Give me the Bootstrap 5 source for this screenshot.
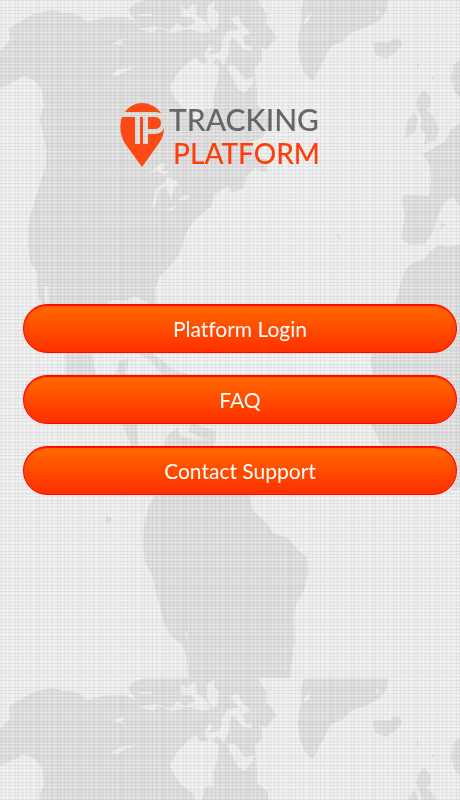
<!DOCTYPE html>
<html lang="en">
<head>
<meta charset="utf-8">
<meta name="viewport" content="width=device-width, initial-scale=1">
<title>Tracking Platform</title>
<link href="https://cdn.jsdelivr.net/npm/bootstrap@5.3.0/dist/css/bootstrap.min.css" rel="stylesheet">
<style>
  body { background: #eee; font-family: Lato, sans-serif; }
  .world-map { z-index: -1; }
  .brand-row { padding-top: 102px; padding-bottom: 134px; padding-right: 20px; }
  .brand-name { font-size: 30px; line-height: 34px; font-weight: 500; color: #666; }
  .brand-name .brand-second { font-size: 28px; color: #ff3d0a; padding-left: 4px; }
  .menu-list { padding-left: 23px; padding-right: 3px; gap: 22px; }
  .btn-menu {
    --bs-btn-color: #fff;
    --bs-btn-hover-color: #fff;
    --bs-btn-active-color: #fff;
    --bs-btn-border-color: #ff0800;
    --bs-btn-hover-border-color: #ff0800;
    --bs-btn-active-border-color: #ff0800;
    --bs-btn-font-size: 21px;
    --bs-btn-line-height: 33px;
    --bs-btn-padding-y: 7px;
    --bs-btn-border-radius: 24px;
    background: linear-gradient(#ff6a00, #ff2f00);
    box-shadow: inset 0 1px 1px #ff0800;
    font-variant-ligatures: none;
  }
</style>
<script src="https://cdn.jsdelivr.net/npm/bootstrap@5.3.0/dist/js/bootstrap.bundle.min.js"></script>
</head>
<body>
<svg class="world-map position-fixed top-0 start-0 w-100 h-100" aria-hidden="true">
  <defs>
    <pattern id="map" width="920" height="678" patternUnits="userSpaceOnUse">
      <g fill="#dcdcdc">
        <path d="M-5 54L3 48L10 40L9 29L14 25L25 19L33 14L47 11L55 10L62 13L72 13L80 16L87 22L94 20L108 17L125 17L136 22L128 10L134 4L145 0H258L262 7L267 14L266 24L272 30L277 38L271 43L266 50L261 47L262 60L255 68L257 90L257 105L267 113L269 126L263 137L250 143L258 157L269 160L266 173L255 168L246 177L244 188L232 193L228 186L214 195L211 207L203 213L194 221L186 233L180 253L172 264L160 276L155 290L156 306L162 322L158 330L151 317L148 303L135 296L125 301L113 300L101 308L95 325L94 340L92 353L96 376L108 390L123 398L127 424L137 424L139 447L153 460L149 466L131 446L122 423L107 405L86 393L66 378L65 353L54 330L42 304L38 296L37 272L30 262L28 245L29 220L35 200L41 181L46 164L46 150L43 132L39 118L44 107L42 90L35 81L24 76L15 81L-5 91Z"/>
        <path d="M115 378L119 361L129 358L126 374L120 382ZM139 354L151 353L162 360L170 368L188 374L178 379L160 373L151 361ZM163 449L167 436L178 427L180 436L194 440L216 438L213 448L245 470L250 497L253 511L265 521L274 534L287 537L299 551L307 557L308 573L304 590L296 604L294 618L295 640L290 678H188L187 660L183 646L170 635L164 623L157 596L152 575L145 562L143 544L144 525L148 508L156 494L156 470Z"/>
        <path d="M193 421L200 426L216 431L215 438L202 438L188 431ZM304 0H388L386 12L380 20L365 28L352 32L342 42L331 46L325 58L319 69L313 81L305 74L300 62L298 42L301 25L301 9ZM374 51L373 43L382 42L388 43L394 38L400 39L402 45L395 53L386 59L376 55ZM106 515L112 519L107 525Z"/>
        <path d="M418 97L424 89L431 98L430 107L426 109L434 117L439 130L435 141L423 145L426 136L420 127L422 119L416 105ZM407 122L414 112L418 120L415 132L405 139ZM460 123L451 130L445 141L432 149L422 154L430 165L431 181L429 196L405 195L402 199L405 216L401 239L410 245L425 244L433 232L438 215L446 201L453 197L465 213L470 125ZM412 263L424 259L431 250L440 245L448 247L465 243V484L453 492L446 472L420 466L394 458L380 443L371 424L374 378L370 360L379 335L395 306L400 285L405 270ZM460 60L453 65L451 79L454 91L460 97ZM441 222L446 225L440 229ZM417 62L420 66L417 68ZM432 75L435 78L432 80ZM337 234L341 237L338 240Z"/>
      </g>
      <!-- bays, straits and lakes -->
      <g fill="#eee">
        <path d="M170 87L177 74L187 63L196 57L201 64L210 62L219 67L217 83L213 96L214 108L205 109L203 119L197 127L193 116L182 107L175 98ZM227 67L234 65L245 79L255 77L252 84L245 93L238 89ZM139 29L154 26L170 30L177 23L185 28L195 23L192 17L182 17L181 6L187 10L195 3L197 15L206 22L211 31L204 33L188 29L173 33L158 28L153 33ZM207 7L215 0L214 8L219 14L217 28L212 30L207 21ZM204 55L210 44L213 49L207 55L219 53L224 43L230 39L229 53L224 65L217 58L210 66ZM230 18L238 16L243 26L248 29L250 34L242 36L245 45L252 46L251 51L242 48L235 39L231 37L229 48L221 43L227 32L239 29Z"/>
        <path d="M110 46L117 41L125 38L122 43L125 46L115 44ZM111 75L119 69L129 68L137 66L126 71L117 76ZM151 210L154 199L155 190L165 182L167 177L177 181L179 187L175 185L171 200L166 186L158 191L156 203ZM164 211L171 208L177 205L173 210ZM178 200L184 195L191 196L185 200ZM149 173L161 163L166 164L162 171L170 171L165 175L157 171ZM44 286L48 286L49 310L46 312ZM216 196L226 190L230 194L220 202ZM185 630L188 634L186 641ZM138 14H152V16H140ZM303 13L307 18L311 11L309 21L303 25L306 17ZM376 10L380 12L377 16Z"/>
      </g>
    </pattern>
    <pattern id="weave" width="21" height="17" patternUnits="userSpaceOnUse">
      <path d="M0 .5H21M0 7.5H21M0 13.5H21" stroke="#999" stroke-opacity=".15"/>
      <path d="M0 3.5H21M0 10.5H21" stroke="#aaa" stroke-opacity=".12"/>
      <path d="M1.5 0V17M5.5 0V17M9.5 0V17M15.5 0V17M18.5 0V17" stroke="#999" stroke-opacity=".1"/>
      <path d="M0 2.5H21M0 5.5H21M0 12.5H21M0 15.5H21" stroke="#fff" stroke-opacity=".22"/>
      <path d="M3.5 0V17M7.5 0V17M12.5 0V17M20.5 0V17" stroke="#fff" stroke-opacity=".18"/>
    </pattern>
    <filter id="soft" x="0" y="0" width="100%" height="100%"><feGaussianBlur stdDeviation=".7"/></filter>
  </defs>
  <rect width="100%" height="100%" fill="url(#map)" filter="url(#soft)"/>
  <rect width="100%" height="100%" fill="url(#weave)"/>
</svg>

<header class="brand-row d-flex justify-content-center">
  <h1 class="d-flex gap-1 m-0 brand-name">
    <svg width="45" height="66" viewBox="0 0 45 64" aria-hidden="true">
      <path fill="#fc4a17" d="M5 9C14-3 31-3 41 10L36 9ZM2 14H15V41H20V14H23V41H28V31H34C40 31 43 28 44 25C44 32 41 38 37 43L22 64L6 42C0 34-1 23 2 14ZM28 14H35C43 14 43 26 35 26H28Z"/>
    </svg>
    <span class="d-flex flex-column"><span>TRACKING</span><span class="brand-second">PLATFORM</span></span>
  </h1>
</header>

<main>
  <nav class="menu-list d-grid" aria-label="Main menu">
    <a class="btn btn-menu" href="#login">Platform Login</a>
    <a class="btn btn-menu" href="#faq">FAQ</a>
    <a class="btn btn-menu" href="#support">Contact Support</a>
  </nav>
</main>
</body>
</html>
